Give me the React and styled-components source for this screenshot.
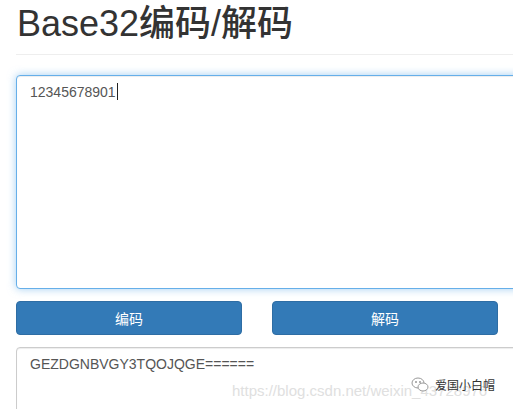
import React from 'react'
import styled, { createGlobalStyle } from 'styled-components'

const Global = createGlobalStyle`
    html, body {
        margin: 0;
        background: #fff;
        overflow: hidden;
    }
    body {
        font-family: "Liberation Sans", Arial, "Noto Sans CJK SC", sans-serif;
        color: #333;
    }
`

const PAGE = styled.div`
    position: relative;
    width: 540px;
    padding-left: 16px;
`

const HEADER = styled.div`
    border-bottom: 1px solid #eee;
    padding: 4px 0 10px 1px;

    h1 {
        margin: 0;
        font-size: 36px;
        line-height: 40px;
        font-weight: 500;
        color: #333;
    }
`

const SPACER = styled.div`
    height: 20px;
`

const TEXTBOX = styled.div`
    box-sizing: border-box;
    width: 540px;
    height: ${props => props.height}px;
    padding: 6px 13px;
    font-size: 14px;
    line-height: 20px;
    color: #555;
    background: #fff;
    border-radius: 4px;
    border: 1px solid ${props => props.focused ? '#66afe9' : '#ccc'};
    box-shadow: ${props => props.focused
        ? 'inset 0 1px 1px rgba(0,0,0,.075), 0 0 8px rgba(102,175,233,.6)'
        : 'inset 0 1px 1px rgba(0,0,0,.075)'};
`

const CARET = styled.span`
    display: inline-block;
    width: 1px;
    height: 17px;
    background: #222;
    vertical-align: -3px;
    margin-left: 1px;
`

const BUTTONS = styled.div`
    display: flex;
    gap: 30px;
    margin: 12px 0;
`

const BUTTON = styled.button`
    width: 226px;
    height: 34px;
    padding: 0;
    border: 1px solid #2e6da4;
    border-radius: 4px;
    background: #337ab7;
    color: #fff;
    font-family: "Liberation Sans", Arial, "Noto Sans CJK SC", sans-serif;
    font-size: 14px;
    cursor: pointer;
`

const WATERMARK = styled.div`
    position: absolute;
    left: 232px;
    top: 382px;
    font-size: 15px;
    color: #e0e0e0;
    white-space: nowrap;
`

const BADGE = styled.div`
    position: absolute;
    left: 411px;
    top: 376px;
    display: flex;
    align-items: center;
    gap: 6px;
    font-size: 12px;
    color: #333;
    font-family: "Noto Sans CJK SC", sans-serif;
`

export default function App() {
    return (
        <>
            <Global />
            <PAGE>
                <HEADER>
                    <h1>Base32编码/解码</h1>
                </HEADER>
                <SPACER />
                <TEXTBOX focused height={214}>
                    12345678901<CARET />
                </TEXTBOX>
                <BUTTONS>
                    <BUTTON>编码</BUTTON>
                    <BUTTON>解码</BUTTON>
                </BUTTONS>
                <TEXTBOX height={120}>
                    GEZDGNBVGY3TQOJQGE======
                </TEXTBOX>
                <WATERMARK>https://blog.csdn.net/weixin_43728976</WATERMARK>
                <BADGE>
                    <svg width="18" height="16" viewBox="0 0 18 16" fill="none" stroke="#999" strokeWidth="1">
                        <ellipse cx="7" cy="6" rx="6" ry="5" fill="#fff" />
                        <ellipse cx="12" cy="10" rx="5" ry="4" fill="#fff" />
                        <circle cx="5" cy="5" r="0.6" fill="#999" />
                        <circle cx="9" cy="5" r="0.6" fill="#999" />
                    </svg>
                    <span>爱国小白帽</span>
                </BADGE>
            </PAGE>
        </>
    )
}
